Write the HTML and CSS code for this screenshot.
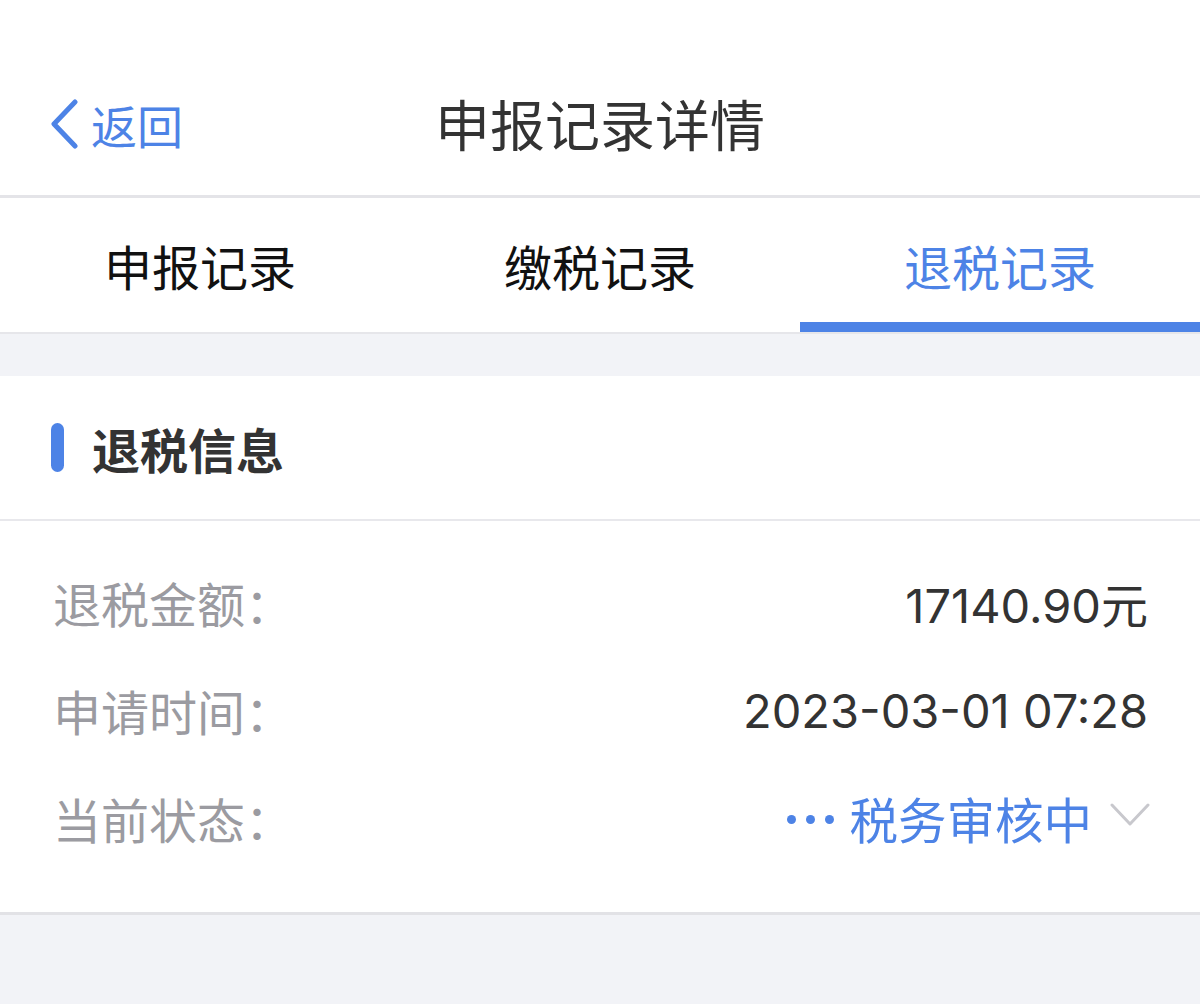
FILE: index.html
```html
<!DOCTYPE html>
<html lang="zh-CN">
<head>
<meta charset="utf-8">
<title>申报记录详情</title>
<link rel="stylesheet" href="styles.css">
</head>
<body>
<div class="page">
  <header class="header">
    <div class="back">
      <svg class="back-icon" width="30" height="50" viewBox="0 0 30 50"><polyline points="26,3 5,25 26,47" fill="none" stroke="#4d83e6" stroke-width="5" stroke-linecap="round" stroke-linejoin="round"/></svg>
      <span class="back-text">返回</span>
    </div>
    <h1 class="title">申报记录详情</h1>
  </header>
  <nav class="tabs">
    <div class="tab">申报记录</div>
    <div class="tab">缴税记录</div>
    <div class="tab active">退税记录</div>
  </nav>
  <div class="spacer"></div>
  <section class="card">
    <div class="card-head">
      <span class="bar"></span>
      <span class="card-title">退税信息</span>
    </div>
    <div class="rows">
      <div class="row">
        <span class="label">退税金额：</span>
        <span class="value">17140.90元</span>
      </div>
      <div class="row">
        <span class="label">申请时间：</span>
        <span class="value">2023-03-01 07:28</span>
      </div>
      <div class="row">
        <span class="label">当前状态：</span>
        <span class="status">
          <span class="dots"><i></i><i></i><i></i></span>
          <span class="status-text">税务审核中</span>
          <svg class="chev" width="40" height="24" viewBox="0 0 40 24"><polyline points="2,2 20,21 38,2" fill="none" stroke="#c8c8cd" stroke-width="3" stroke-linecap="round" stroke-linejoin="round"/></svg>
        </span>
      </div>
    </div>
  </section>
</div>
</body>
</html>
```

FILE: styles.css
```css
* { box-sizing: border-box; margin: 0; padding: 0; }
html, body { background: #f2f3f7; }
body {
  width: 1200px;
  min-height: 1004px;
  font-family: "Liberation Sans", "Noto Sans CJK SC", sans-serif;
  color: #333;
}
.page { width: 1200px; }

.header {
  height: 198px;
  background: #fff;
  border-bottom: 3px solid #e4e4e8;
  position: relative;
  display: flex;
  justify-content: center;
  padding-top: 90px;
}
.back {
  position: absolute;
  left: 49px;
  top: 99px;
  display: flex;
  align-items: center;
  gap: 12px;
}
.back-icon { display: block; }
.back-text {
  font-family: "Noto Sans CJK SC", sans-serif;
  font-size: 46px;
  line-height: 50px;
  color: #4d83e6;
}
.title {
  font-family: "Noto Sans CJK SC", sans-serif;
  font-weight: 400;
  font-size: 55px;
  line-height: 64px;
  color: #333;
}

.tabs {
  display: flex;
  height: 136px;
  background: #fff;
  border-bottom: 2px solid #e6e6ea;
}
.tab {
  flex: 1;
  text-align: center;
  font-family: "Noto Sans CJK SC", sans-serif;
  font-size: 48px;
  line-height: 62px;
  padding-top: 36px;
  color: #111;
  border-bottom: 10px solid transparent;
}
.tab.active {
  color: #4d83e6;
  border-bottom-color: #4d83e6;
}

.spacer { height: 42px; }

.card {
  background: #fff;
  border-bottom: 3px solid #e2e2e6;
}
.card-head {
  height: 145px;
  display: flex;
  align-items: center;
  padding-left: 51px;
  border-bottom: 2px solid #e8e8ec;
}
.bar {
  width: 13px;
  height: 49px;
  border-radius: 7px;
  background: #4d83e6;
  margin-right: 28px;
}
.card-title {
  font-family: "Noto Sans CJK SC", sans-serif;
  font-weight: 700;
  font-size: 48px;
  color: #333;
}

.rows {
  padding: 27px 52px 40px 53px;
}
.row {
  height: 108px;
  display: flex;
  align-items: center;
  justify-content: space-between;
}
.label {
  font-family: "Noto Sans CJK SC", sans-serif;
  font-size: 48px;
  color: #9b9ba1;
}
.value {
  font-family: Inter, "Noto Sans CJK SC", sans-serif;
  font-size: 47px;
  color: #333;
}
.status {
  display: flex;
  align-items: center;
}
.dots {
  display: flex;
  gap: 10px;
  margin-right: 15px;
  margin-top: 3px;
}
.dots i {
  display: block;
  width: 9px;
  height: 9px;
  border-radius: 50%;
  background: #4d83e6;
}
.status-text {
  font-family: "Noto Sans CJK SC", sans-serif;
  font-size: 48.5px;
  color: #4d83e6;
}
.chev {
  display: block;
  margin-left: 18px;
  margin-right: -2px;
  margin-top: -6px;
}
```
